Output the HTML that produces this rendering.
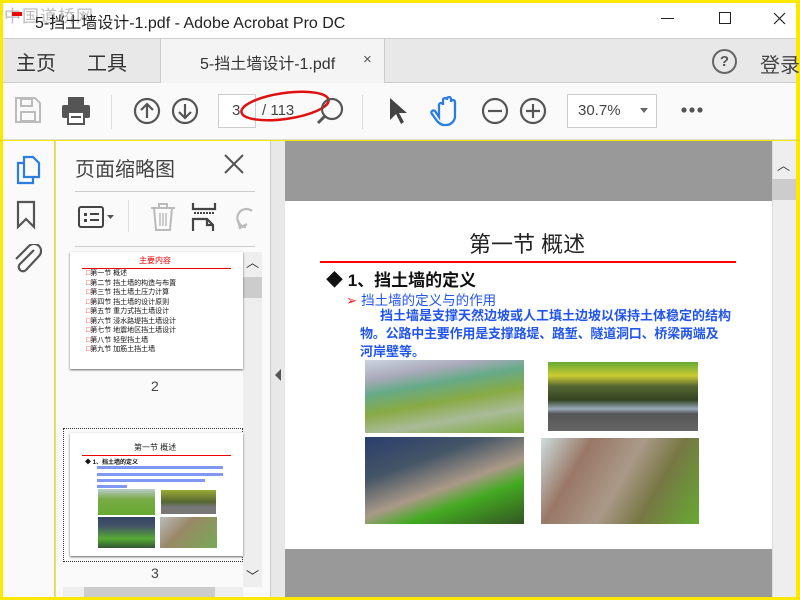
<!DOCTYPE html>
<html><head><meta charset="utf-8"><style>
*{margin:0;padding:0;box-sizing:border-box}
body{width:800px;height:600px;overflow:hidden;background:#ffe800;position:relative;font-family:"Liberation Sans","Noto Sans CJK SC",sans-serif}
.a{position:absolute}
.t{position:absolute;white-space:nowrap}
</style></head><body>
<!-- title bar -->
<div class="a" style="left:3px;top:3px;width:793px;height:35px;background:#fff"></div>
<div class="t" style="left:4px;top:2px;font-size:17px;color:#bbb;letter-spacing:1px">中国道桥网</div>
<div class="a" style="left:12px;top:12px;width:10px;height:4px;background:#e00"></div>
<div class="t" style="left:35px;top:9px;font-size:16px;color:#222">5-挡土墙设计-1.pdf - Adobe Acrobat Pro DC</div>
<div class="a" style="left:661px;top:18px;width:13px;height:1px;background:#222"></div>
<div class="a" style="left:719px;top:12px;width:12px;height:12px;border:1px solid #222"></div>
<svg class="a" style="left:773px;top:12px" width="13" height="13"><path d="M1 1L12 12M12 1L1 12" stroke="#222" stroke-width="1.2"/></svg>
<!-- tab bar -->
<div class="a" style="left:3px;top:38px;width:793px;height:45px;background:#e8e8e8;border-top:1px solid #ccc;border-bottom:1px solid #ccc"></div>
<div class="a" style="left:160px;top:39px;width:225px;height:44px;background:#f4f4f4;border-left:1px solid #ccc;border-right:1px solid #ccc"></div>
<div class="t" style="left:16px;top:47px;font-size:20px;color:#333">主页</div>
<div class="t" style="left:87px;top:47px;font-size:20px;color:#333">工具</div>
<div class="t" style="left:200px;top:50px;font-size:16px;color:#333">5-挡土墙设计-1.pdf</div>
<div class="t" style="left:363px;top:51px;font-size:15px;color:#555">×</div>
<div class="a" style="left:712px;top:49px;width:25px;height:25px;border:2px solid #666;border-radius:50%;font-size:15px;font-weight:bold;color:#555;text-align:center;line-height:21px">?</div>
<div class="t" style="left:760px;top:49px;font-size:20px;color:#444">登录</div>
<!-- toolbar -->
<div class="a" style="left:3px;top:83px;width:793px;height:57px;background:#fafafa;border-bottom:1px solid #ddd"></div>
<svg class="a" style="left:14px;top:96px" width="28" height="28"><path d="M2 2h19l5 5v19H2z" fill="none" stroke="#bbb" stroke-width="2"/><rect x="7" y="3" width="11" height="7" fill="none" stroke="#bbb" stroke-width="2"/><rect x="7" y="16" width="14" height="9" fill="none" stroke="#bbb" stroke-width="2"/></svg>
<svg class="a" style="left:61px;top:96px" width="30" height="30"><rect x="7" y="1" width="16" height="8" fill="#555"/><rect x="1" y="9" width="28" height="13" rx="2" fill="#555"/><rect x="7" y="16" width="16" height="12" fill="#fff" stroke="#555" stroke-width="2"/><line x1="10" y1="21" x2="20" y2="21" stroke="#555" stroke-width="2"/></svg>
<div class="a" style="left:111px;top:95px;width:1px;height:34px;background:#ddd"></div>
<svg class="a" style="left:133px;top:97px" width="28" height="28"><circle cx="14" cy="14" r="12" fill="none" stroke="#555" stroke-width="2.2"/><path d="M14 21V8M8 13l6-6 6 6" fill="none" stroke="#555" stroke-width="2.2"/></svg>
<svg class="a" style="left:171px;top:97px" width="28" height="28"><circle cx="14" cy="14" r="12" fill="none" stroke="#555" stroke-width="2.2"/><path d="M14 7v13M8 15l6 6 6-6" fill="none" stroke="#555" stroke-width="2.2"/></svg>
<div class="a" style="left:218px;top:94px;width:38px;height:34px;background:#fff;border:1px solid #ccc"></div>
<div class="t" style="left:232px;top:102px;font-size:15px;color:#444">3</div>
<div class="t" style="left:262px;top:102px;font-size:15px;color:#444">/ 113</div>
<svg class="a" style="left:236px;top:86px" width="100" height="40"><ellipse cx="49" cy="20" rx="44" ry="13" fill="none" stroke="#e01010" stroke-width="2.5" transform="rotate(-8 49 20)"/></svg>
<svg class="a" style="left:316px;top:97px" width="28" height="28"><circle cx="16" cy="12" r="10" fill="none" stroke="#555" stroke-width="2.2"/><path d="M9 19l-7 7" stroke="#555" stroke-width="3"/></svg>
<div class="a" style="left:362px;top:95px;width:1px;height:34px;background:#ddd"></div>
<svg class="a" style="left:387px;top:96px" width="22" height="30"><path d="M3 2v22l6-6 5 10 3-2-5-9h8z" fill="#444"/></svg>
<svg class="a" style="left:430px;top:95px" width="32" height="32"><path d="M9 22V10a2 2 0 014 0v-5a2 2 0 014 0v-1a2 2 0 014 0v3a2 2 0 014 0v14c0 5-4 9-9 9h-2c-3 0-5-2-7-4l-5-7a2 2 0 013-3z" fill="none" stroke="#2b7de0" stroke-width="2.3"/></svg>
<svg class="a" style="left:481px;top:97px" width="28" height="28"><circle cx="14" cy="14" r="12" fill="none" stroke="#555" stroke-width="2.2"/><path d="M7 14h14" stroke="#555" stroke-width="2.2"/></svg>
<svg class="a" style="left:519px;top:97px" width="28" height="28"><circle cx="14" cy="14" r="12" fill="none" stroke="#555" stroke-width="2.2"/><path d="M7 14h14M14 7v14" stroke="#555" stroke-width="2.2"/></svg>
<div class="a" style="left:567px;top:94px;width:90px;height:34px;background:#fff;border:1px solid #ccc"></div>
<div class="t" style="left:578px;top:102px;font-size:15px;color:#444">30.7%</div>
<div class="a" style="left:640px;top:108px;border-left:4px solid transparent;border-right:4px solid transparent;border-top:5px solid #666"></div>
<svg class="a" style="left:680px;top:106px" width="24" height="8"><circle cx="4" cy="4" r="2.6" fill="#555"/><circle cx="12" cy="4" r="2.6" fill="#555"/><circle cx="20" cy="4" r="2.6" fill="#555"/></svg>
<!-- left rail -->
<div class="a" style="left:3px;top:141px;width:52px;height:456px;background:#fafafa;border-right:1px solid #ccc"></div>
<svg class="a" style="left:15px;top:155px" width="28" height="30"><path d="M9 2h9l6 6v14H9z" fill="none" stroke="#2b7de0" stroke-width="2.2"/><path d="M9 8H3v20h15v-6" fill="none" stroke="#2b7de0" stroke-width="2.2"/></svg>
<svg class="a" style="left:16px;top:200px" width="22" height="30"><path d="M2 2h16v25l-8-8-8 8z" fill="none" stroke="#555" stroke-width="2.2"/></svg>
<svg class="a" style="left:12px;top:244px" width="30" height="32"><path d="M22 6L8 20a4 4 0 006 6L27 12a7 7 0 00-10-10L4 15" fill="none" stroke="#555" stroke-width="2.2"/></svg>
<!-- panel -->
<div class="a" style="left:56px;top:141px;width:214px;height:456px;background:#fafafa"></div>
<div class="t" style="left:75px;top:153px;font-size:20px;color:#444">页面缩略图</div>
<svg class="a" style="left:224px;top:154px" width="20" height="20"><path d="M1 1L19 19M19 1L1 19" stroke="#555" stroke-width="2"/></svg>
<div class="a" style="left:75px;top:191px;width:180px;height:1px;background:#ccc"></div>
<svg class="a" style="left:78px;top:205px" width="38" height="26"><rect x="1" y="2" width="24" height="20" rx="2" fill="none" stroke="#444" stroke-width="2"/><rect x="6" y="8" width="3" height="3" fill="#444"/><rect x="6" y="14" width="3" height="3" fill="#444"/><path d="M12 9h9M12 15h9" stroke="#444" stroke-width="2"/><path d="M29 10h7l-3.5 4z" fill="#555"/></svg>
<div class="a" style="left:128px;top:200px;width:1px;height:32px;background:#ddd"></div>
<svg class="a" style="left:149px;top:202px" width="28" height="30"><path d="M2 6h24M10 6V2h8v4M5 6l2 22h14l2-22" fill="none" stroke="#bbb" stroke-width="2"/><path d="M11 11v13M14 11v13M17 11v13" stroke="#bbb" stroke-width="1.5"/></svg>
<svg class="a" style="left:191px;top:203px" width="26" height="28"><path d="M2 0v6h22V0M2 28v-12h14l6 6v6M16 16v6h6" fill="none" stroke="#444" stroke-width="2.2"/><path d="M3 10h20" stroke="#444" stroke-width="2" stroke-dasharray="2 1"/></svg>
<svg class="a" style="left:232px;top:203px" width="22" height="28"><path d="M20 8a9 9 0 10-6 16" fill="none" stroke="#bbb" stroke-width="2.2"/><path d="M6 17l2 8 7-4" fill="none" stroke="#bbb" stroke-width="2.2"/></svg>
<div class="a" style="left:75px;top:246px;width:180px;height:1px;background:#ccc"></div>
<!-- thumb list scrollbar -->
<div class="a" style="left:243px;top:252px;width:19px;height:335px;background:#eee"></div>
<div class="a" style="left:243px;top:277px;width:19px;height:21px;background:#ccc"></div>
<div class="t" style="left:246px;top:252px;font-size:13px;color:#333">︿</div>
<div class="t" style="left:246px;top:566px;font-size:13px;color:#333">﹀</div>
<div class="a" style="left:63px;top:587px;width:180px;height:10px;background:#eee"></div>
<div class="a" style="left:84px;top:587px;width:131px;height:10px;background:#ccc"></div>
<!-- thumb 1 -->
<div class="a" style="left:70px;top:252px;width:173px;height:117px;background:#fff;box-shadow:0 1px 2px #666"></div>
<div class="t" style="left:139px;top:255px;font-size:8px;color:#e00">主要内容</div>
<div class="a" style="left:82px;top:268px;width:149px;height:1px;background:#e00"></div>
<div class="a" style="left:86px;top:269px;font-size:7px;line-height:9.5px;color:#111;white-space:nowrap">
<div><span style="color:#e00">□</span>第一节 概述</div><div><span style="color:#e00">□</span>第二节 挡土墙的构造与布置</div><div><span style="color:#e00">□</span>第三节 挡土墙土压力计算</div><div><span style="color:#e00">□</span>第四节 挡土墙的设计原则</div><div><span style="color:#e00">□</span>第五节 重力式挡土墙设计</div><div><span style="color:#e00">□</span>第六节 浸水路堤挡土墙设计</div><div><span style="color:#e00">□</span>第七节 地震地区挡土墙设计</div><div><span style="color:#e00">□</span>第八节 轻型挡土墙</div><div><span style="color:#e00">□</span>第九节 加筋土挡土墙</div></div>
<div class="t" style="left:151px;top:378px;font-size:14px;color:#444">2</div>
<!-- thumb 2 -->
<div class="a" style="left:63px;top:428px;width:180px;height:134px;border:1px dotted #333"></div>
<div class="a" style="left:70px;top:433px;width:173px;height:123px;background:#fff;box-shadow:0 1px 2px #666"></div>
<div class="t" style="left:134px;top:442px;font-size:8px;color:#222">第一节 概述</div>
<div class="a" style="left:82px;top:455px;width:149px;height:1px;background:#e00"></div>
<div class="t" style="left:85px;top:457px;font-size:6px;font-weight:bold;color:#111">◆ 1、挡土墙的定义</div>
<div class="a" style="left:97px;top:466px;width:126px;height:3px;background:#4a6cf0;opacity:.7"></div>
<div class="a" style="left:97px;top:473px;width:126px;height:3px;background:#4a6cf0;opacity:.7"></div>
<div class="a" style="left:97px;top:479px;width:108px;height:3px;background:#4a6cf0;opacity:.7"></div>
<div class="a" style="left:97px;top:485px;width:30px;height:3px;background:#4a6cf0;opacity:.7"></div>
<div class="a" style="left:98px;top:489px;width:57px;height:26px;background:linear-gradient(#bcc 0,#7a4 40%,#6a3)"></div>
<div class="a" style="left:161px;top:490px;width:55px;height:24px;background:linear-gradient(#9a3 0,#563 50%,#777 70%)"></div>
<div class="a" style="left:98px;top:517px;width:57px;height:31px;background:linear-gradient(#346 0,#456 30%,#5a3 70%,#353)"></div>
<div class="a" style="left:160px;top:517px;width:57px;height:31px;background:linear-gradient(135deg,#bbb,#986 40%,#7a5)"></div>
<div class="t" style="left:151px;top:565px;font-size:14px;color:#444">3</div>
<!-- collapse strip -->
<div class="a" style="left:270px;top:141px;width:15px;height:456px;background:#e8e8e8;border-left:1px solid #ccc"></div>
<div class="a" style="left:275px;top:369px;border-top:6px solid transparent;border-bottom:6px solid transparent;border-right:6px solid #555"></div>
<!-- doc area -->
<div class="a" style="left:285px;top:141px;width:487px;height:456px;background:#999"></div>
<div class="a" style="left:772px;top:141px;width:24px;height:456px;background:#eee;border-left:1px solid #ddd"></div>
<div class="a" style="left:772px;top:179px;width:24px;height:21px;background:#ccc"></div>
<div class="t" style="left:777px;top:155px;font-size:13px;color:#333">︿</div>
<div class="a" style="left:285px;top:201px;width:487px;height:348px;background:#fff"></div>
<div class="t" style="left:469px;top:227px;font-size:22px;color:#222">第一节 概述</div>
<div class="a" style="left:320px;top:261px;width:416px;height:2px;background:#f00"></div>
<div class="t" style="left:326px;top:266px;font-size:17px;font-weight:bold;color:#111">◆ 1、挡土墙的定义</div>
<div class="t" style="left:346px;top:289px;font-size:13.5px;color:#2255ee"><span style="color:#e22">➢</span> 挡土墙的定义与的作用</div>
<div class="t" style="left:380px;top:307px;font-size:13px;font-weight:bold;color:#2255ee;line-height:18px">挡土墙是支撑天然边坡或人工填土边坡以保持土体稳定的结构</div>
<div class="t" style="left:360px;top:325px;font-size:13px;font-weight:bold;color:#2255ee;line-height:18px;letter-spacing:-0.2px">物。公路中主要作用是支撑路堤、路堑、隧道洞口、桥梁两端及</div>
<div class="t" style="left:360px;top:343px;font-size:13px;font-weight:bold;color:#2255ee;line-height:18px">河岸壁等。</div>
<div class="a" style="left:365px;top:360px;width:159px;height:73px;background:linear-gradient(170deg,#ccd4e0 0,#aab 20%,#6a8 35%,#8a4 55%,#ab9 75%,#7a3)"></div>
<div class="a" style="left:548px;top:362px;width:150px;height:69px;background:linear-gradient(#6a3 0,#cc3 20%,#563 35%,#342 55%,#9ab 68%,#555 75%,#666)"></div>
<div class="a" style="left:365px;top:437px;width:159px;height:87px;background:linear-gradient(160deg,#2a3e6e 0,#456 30%,#a98 55%,#4a2 70%,#352)"></div>
<div class="a" style="left:541px;top:438px;width:158px;height:86px;background:linear-gradient(120deg,#cdd 0,#976 25%,#a98 50%,#774 70%,#6a3)"></div>
</body></html>
